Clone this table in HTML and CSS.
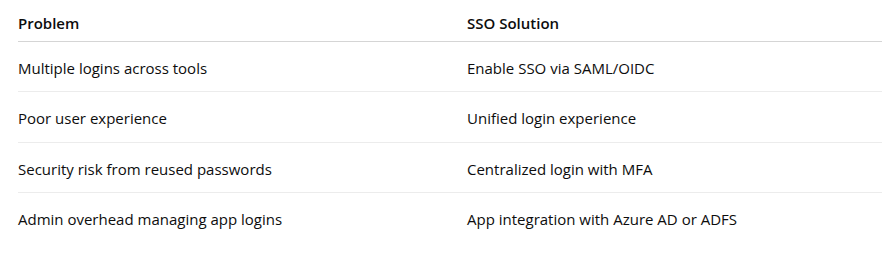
FILE: index.html
```html
<!DOCTYPE html>
<html>
<head>
<meta charset="utf-8">
<link rel="stylesheet" href="styles.css">
</head>
<body>
<div class="table">
  <div class="row head">
    <div class="cell">Problem</div>
    <div class="cell">SSO Solution</div>
  </div>
  <div class="row">
    <div class="cell">Multiple logins across tools</div>
    <div class="cell">Enable SSO via SAML/OIDC</div>
  </div>
  <div class="row">
    <div class="cell">Poor user experience</div>
    <div class="cell">Unified login experience</div>
  </div>
  <div class="row">
    <div class="cell">Security risk from reused passwords</div>
    <div class="cell">Centralized login with MFA</div>
  </div>
  <div class="row last">
    <div class="cell">Admin overhead managing app logins</div>
    <div class="cell">App integration with Azure AD or ADFS</div>
  </div>
</div>
</body>
</html>
```
FILE: styles.css
```css
html, body {
  margin: 0;
  padding: 0;
  background: #ffffff;
}
body {
  font-family: "Open Sans", "Noto Sans", sans-serif;
  font-size: 15px;
  line-height: 20px;
  color: #0d0d0d;
  padding: 0 11px 0 18px;
}
.table {
  display: flex;
  flex-direction: column;
  width: 864px;
}
.row {
  display: grid;
  grid-template-columns: 449px 1fr;
  border-bottom: 1px solid #ececec;
  padding: 16px 0 13.33px;
}
.row.head {
  font-weight: 600;
  border-bottom-color: #d5d5d5;
  padding: 13px 0 8px;
}
.row.last {
  border-bottom: none;
}
```
